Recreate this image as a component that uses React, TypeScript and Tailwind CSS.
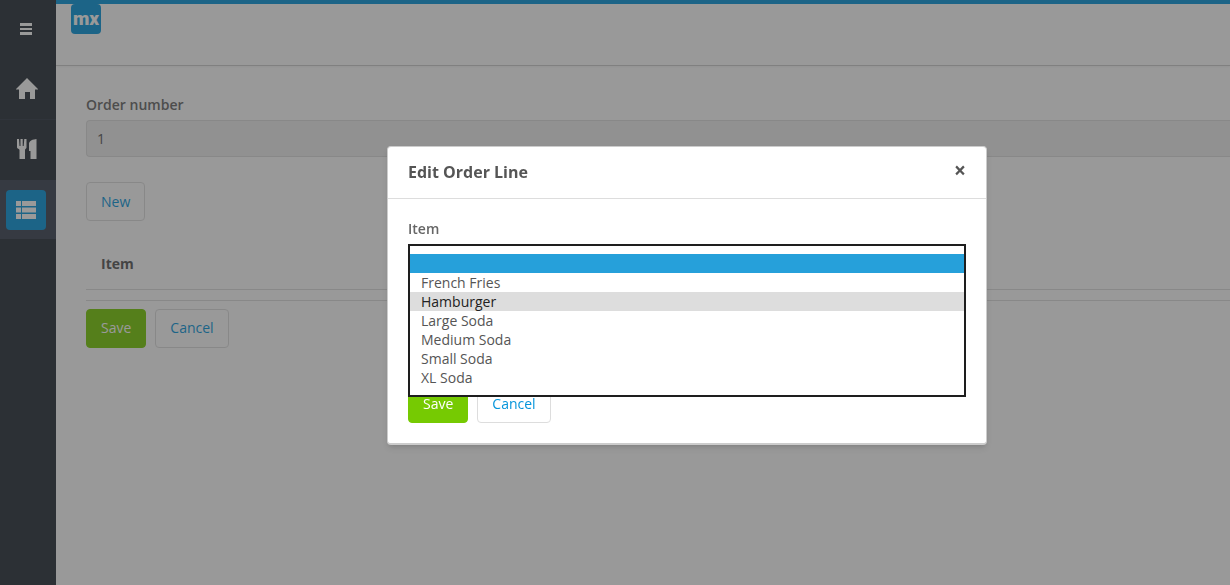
import React, { useState } from 'react';

const items = ['', 'French Fries', 'Hamburger', 'Large Soda', 'Medium Soda', 'Small Soda', 'XL Soda'];

const MenuIcon = () => (
  <svg width="12" height="12" viewBox="0 0 12 12" fill="currentColor" aria-hidden="true">
    <path d="M0 0h12v3H0zM0 5h12v2H0zM0 9h12v3H0z" />
  </svg>
);

const HomeIcon = () => (
  <svg width="22" height="22" viewBox="0 0 22 22" fill="currentColor" aria-hidden="true">
    <path d="M11 0 22 11V11.500H19V21H14V14H9V21H3V11.500H0V11Z" />
  </svg>
);

const CutleryIcon = () => (
  <svg width="20" height="20" viewBox="0 0 20 20" fill="currentColor" aria-hidden="true">
    <path d="M0 0h2l.5 7H3.500V0h2.200v7h1L7.300 0H9.500v8.500c0 1-1.500 1.500-1.500 2.500v9H2.500v-9C2.500 10 0 9.500 0 8.500Z" />
    <path d="M19.500 0v20H13.500v-8H12V4c1-2 3-3.500 5-3.500Z" />
  </svg>
);

const ListIcon = () => (
  <svg width="20" height="18" viewBox="0 0 20 18" fill="currentColor" aria-hidden="true">
    <path d="M0 0h5v5H0zM6 0h14v5H6zM0 6.500h5v5H0zM6 6.500h14v5H6zM0 13h5v5H0zM6 13h14v5H6z" />
  </svg>
);

const primaryButton = 'h-[39px] rounded border border-[#76ca02] bg-[#76ca02] px-3.5 text-white';
const defaultButton = 'h-[39px] rounded border border-[#ddd] bg-white px-3.5 text-[#0595db]';

const Sidebar = () => (
  <nav className="w-14 shrink-0 bg-[#252c36] text-white">
    <button aria-label="Toggle menu" className="flex h-[58px] w-full items-center justify-center pr-1">
      <MenuIcon />
    </button>
    <a href="#home" aria-label="Home" className="flex h-[61px] items-center justify-center pr-0.5">
      <HomeIcon />
    </a>
    <a href="#items" aria-label="Items" className="flex h-[61px] items-center justify-center border-t border-[#2d3542] pr-0.5 pb-0.5">
      <CutleryIcon />
    </a>
    <a href="#orders" aria-label="Orders" className="flex h-[59px] items-center bg-[#394150] px-1.5">
      <span className="flex size-10 items-center justify-center rounded-sm bg-[#0595db]">
        <ListIcon />
      </span>
    </a>
  </nav>
);

const OrderPage = () => (
  <main className="pt-[29px] pl-[30px]">
    <label htmlFor="order-number" className="mb-[5px] block font-semibold text-[#666]">Order number</label>
    <input
      id="order-number"
      readOnly
      value="1"
      className="block h-[37px] w-full rounded-l border border-r-0 border-[#ddd] bg-[#eee] px-2.5"
    />
    <button className={`mt-[25px] ${defaultButton}`}>New</button>
    <table className="mt-[18px] w-full">
      <thead>
        <tr className="border-b border-[#ddd]">
          <th className="h-[50px] px-[15px] text-left font-bold">Item</th>
        </tr>
      </thead>
    </table>
    <hr className="mt-2.5 border-[#ddd]" />
    <div className="mt-2 flex gap-[9px]">
      <button className={primaryButton}>Save</button>
      <button className={defaultButton}>Cancel</button>
    </div>
  </main>
);

const EditDialog = () => {
  const [selected, setSelected] = useState('');
  const [hovered, setHovered] = useState('Hamburger');
  const [isOpen, setIsOpen] = useState(true);

  const handlePick = (item: string) => {
    setSelected(item);
    setIsOpen(false);
  };

  return (
    <div role="dialog" aria-labelledby="dialog-title" className="w-[600px] rounded border border-b-2 border-[#ccc] bg-white shadow-md">
      <div className="flex h-[52px] items-center justify-between border-b border-[#ddd] px-5 pb-0.5">
        <h4 id="dialog-title" className="text-base font-bold">Edit Order Line</h4>
        <button aria-label="Close" className="pb-1 text-[21px] leading-5 font-bold">×</button>
      </div>
      <div className="p-5">
        <label htmlFor="item" className="mb-[5px] block font-semibold text-[#666]">Item</label>
        <div className="relative">
          <select
            id="item"
            value={selected}
            onChange={(e) => setSelected(e.target.value)}
            className="block h-[37px] w-full rounded border border-[#ddd] bg-white px-2.5"
          >
            {items.map((item) => (
              <option key={item} value={item}>{item}</option>
            ))}
          </select>
          {isOpen && (
            <ul role="listbox" aria-label="Item" className="absolute inset-x-0 top-0 z-10 border-2 border-[#1e1e1e] bg-white py-2">
              {items.map((item) => (
                <li
                  key={item}
                  role="option"
                  aria-selected={item === selected}
                  onClick={() => handlePick(item)}
                  onMouseEnter={() => setHovered(item)}
                  className={`h-[19px] px-[11px] leading-[19px] ${
                    item === selected ? 'bg-[#26a0da] text-white' : item === hovered ? 'bg-[#ddd] text-[#222]' : ''
                  }`}
                >
                  {item}
                </li>
              ))}
            </ul>
          )}
        </div>
        <div className="mt-[103px] flex gap-[9px]">
          <button className={primaryButton}>Save</button>
          <button className={defaultButton}>Cancel</button>
        </div>
      </div>
    </div>
  );
};

const App: React.FC = () => (
  <div className="flex min-h-screen bg-white font-['Open_Sans','Noto_Sans',sans-serif] text-sm text-[#555]">
    <Sidebar />
    <div className="min-w-0 flex-1">
      <header className="h-[66px] border-t-4 border-b border-t-[#0595db] border-b-[#ccc] pl-[15px] shadow-xs">
        <div className="flex size-[30px] justify-center rounded bg-[#0595db] font-['Roboto',sans-serif] text-[19px] leading-[30px] font-black text-white">mx</div>
      </header>
      <OrderPage />
    </div>
    <div className="fixed inset-0 flex items-start justify-center bg-[#333]/50 pt-[146px] pl-36">
      <EditDialog />
    </div>
  </div>
);

export default App;
